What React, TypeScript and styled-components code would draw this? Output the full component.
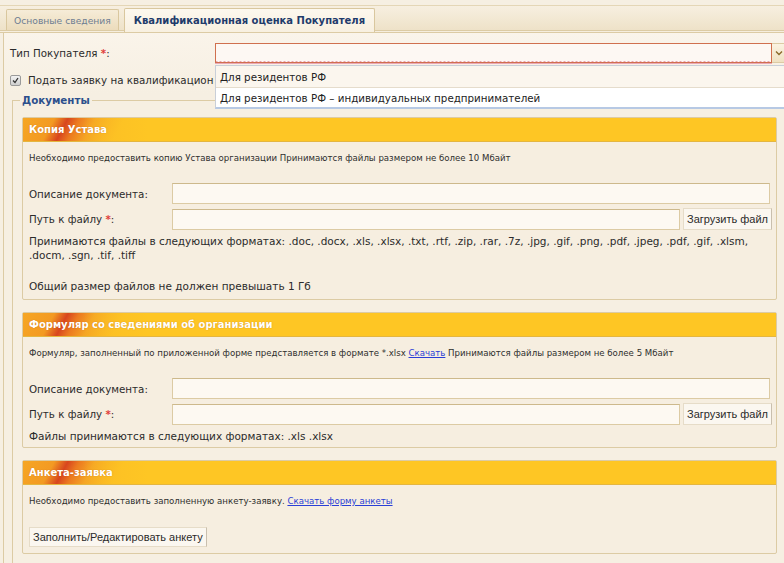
import React from "react";
import styled, { createGlobalStyle } from "styled-components";

const GlobalStyle = createGlobalStyle`
  html, body { margin: 0; padding: 0; }
  body {
    background: #f6efe2;
    font-family: "DejaVu Sans", Verdana, sans-serif;
    color: #2b2b2b;
    overflow: hidden;
  }
`;

const Window = styled.div`
  width: 800px;
  height: 563px;
  overflow: hidden;
  background: #f6efe2;
`;

const TabBar = styled.div`
  height: 24px;
  margin-top: 5px;
  padding-left: 6px;
  display: flex;
  align-items: flex-end;
  gap: 5px;
  background: linear-gradient(#f7efe0, #eee2c8);
  border-top: 1px solid #e4d6b6;
  border-bottom: 3px double #dccba4;
`;

const Tab = styled.div<{ $active?: boolean }>`
  height: ${(p) => (p.$active ? 24 : 21)}px;
  box-sizing: border-box;
  display: flex;
  align-items: center;
  padding: 0 ${(p) => (p.$active ? 9 : 7)}px;
  margin-bottom: ${(p) => (p.$active ? -2 : 0)}px;
  border: 1px solid #d9c79e;
  border-bottom: none;
  border-radius: 2px 2px 0 0;
  background: ${(p) =>
    p.$active ? "linear-gradient(#fdf8ee, #f8f0e0)" : "linear-gradient(#f6ecd8, #ecdcbc)"};
  font-size: ${(p) => (p.$active ? 10 : 9.2)}px;
  font-weight: ${(p) => (p.$active ? 700 : 400)};
  color: ${(p) => (p.$active ? "#1f3b6b" : "#6e7d92")};
  white-space: nowrap;
`;

const Panel = styled.div`
  margin-left: 3px;
  border-left: 1px solid #dccba4;
  background: linear-gradient(#faf4ea, #f6efe2 60px);
  padding: 10px 0 0 6px;
  min-height: 540px;
`;

const FieldRow = styled.div`
  position: relative;
  display: flex;
  align-items: center;
  height: 20px;
`;

const TopLabel = styled.div`
  width: 205px;
  font-size: 10.3px;
  color: #2b2b2b;
`;

const Star = styled.span`
  color: #e0403a;
  font-weight: 700;
`;

const Select = styled.div`
  width: 557px;
  height: 20px;
  box-sizing: border-box;
  border: 1px solid #d0704e;
  box-shadow: 0 1px 0 #e9a8b8;
  background-image: linear-gradient(to right, #e8a2b2 50%, transparent 50%);
  background-size: 4px 1px;
  background-repeat: repeat-x;
  background-position: bottom;
  background-color: #fdf8f3;
`;

const Arrow = styled.div`
  width: 14px;
  height: 20px;
  box-sizing: border-box;
  border: 1px solid #dccba4;
  border-left: none;
  background: linear-gradient(#fbf3e2, #efe1c2);
  display: flex;
  align-items: center;
  justify-content: center;
`;

const DropList = styled.div`
  position: absolute;
  left: 205px;
  top: 22px;
  width: 580px;
  background: #fff;
  border: 1px solid #c9cfd8;
  border-right: none;
  border-bottom: 2px solid #b7c9e4;
  z-index: 5;
`;

const DropItem = styled.div<{ $hover?: boolean }>`
  height: ${(p) => (p.$hover ? 21 : 19)}px;
  display: flex;
  align-items: center;
  padding-left: 4px;
  font-size: 10.3px;
  color: #222;
  background: ${(p) => (p.$hover ? "#fbf6ee" : "#ffffff")};
  border-bottom: ${(p) => (p.$hover ? "1px solid #e5dccc" : "none")};
`;

const CheckRow = styled.label`
  display: flex;
  width: fit-content;
  align-items: center;
  gap: 7px;
  margin-top: 10px;
  height: 14px;
  font-size: 10.3px;
  color: #2b2b2b;
`;

const CheckText = styled.span`
  width: 186px;
  overflow: hidden;
  white-space: nowrap;
`;

const CheckBox = styled.span`
  width: 9px;
  height: 9px;
  border: 1px solid #9a9a9a;
  border-radius: 2px;
  background: linear-gradient(#f2f2f2, #cfcfcf);
  display: flex;
  align-items: center;
  justify-content: center;
`;

const Fieldset = styled.fieldset`
  margin: 7px 0 0 2px;
  padding: 11px 0 0 9px;
  border: 1px solid #dccba4;
  border-right: none;
  border-bottom: none;
  min-width: 0;
  width: 790px;
  box-sizing: border-box;
`;

const Legend = styled.legend`
  padding: 0 2px;
  margin-left: -2px;
  font-size: 10.3px;
  font-weight: 700;
  color: #2c4f8c;
`;

const Section = styled.div`
  width: 755px;
  box-sizing: border-box;
  border: 1px solid #dccba4;
  border-radius: 2px;
  background: #f6eee0;
  margin-bottom: 12px;
`;

const SectionHead = styled.div`
  height: 23px;
  display: flex;
  align-items: center;
  padding-left: 6px;
  font-size: 10px;
  font-weight: 700;
  color: #fff;
  text-shadow: 0 0 1px rgba(160, 60, 0, 0.5);
  border-bottom: 1px solid #e4b640;
  background:
    linear-gradient(to right, rgba(254, 198, 36, 0) 60px, #fec624 125px),
    linear-gradient(118deg, #f6a624 0, #f39a22 28px, #d8461e 40px, #ec7a20 50px, #f5a424 64px, #fbbd24 90px);
`;

const SectionBody = styled.div<{ $pb: number }>`
  padding: 10px 6px ${(p) => p.$pb}px 6px;
`;

const Note = styled.div`
  font-size: 8.6px;
  line-height: 12px;
  color: #2e2e2e;
  margin-bottom: 19px;
`;

const Link = styled.a`
  color: #2a3fd6;
  text-decoration: underline;
`;

const InputRow = styled.div`
  display: flex;
  align-items: center;
  margin-bottom: 4px;
`;

const RowLabel = styled.div`
  width: 143px;
  flex-shrink: 0;
  font-size: 10.3px;
  color: #2b2b2b;
`;

const TextInput = styled.div<{ $w: number }>`
  width: ${(p) => p.$w}px;
  flex-shrink: 0;
  height: 21px;
  box-sizing: border-box;
  border: 1px solid #dccba4;
  border-top-color: #cdb98c;
  background: #fdf9f2;
`;

const Button = styled.div<{ $h?: number }>`
  display: inline-flex;
  flex-shrink: 0;
  height: ${(p) => p.$h ?? 22}px;
  box-sizing: border-box;
  align-items: center;
  padding: 0 3px;
  font-family: "Liberation Sans", Arial, sans-serif;
  font-size: 11px;
  color: #2b2b2b;
  background: #fbf7f0;
  border: 1px solid #e6dcc8;
  border-right-color: #c9bfae;
  white-space: nowrap;
`;

const Info = styled.div<{ $mt?: number }>`
  font-size: 10.5px;
  line-height: 14px;
  color: #2b2b2b;
  margin-top: ${(p) => p.$mt ?? 0}px;
`;

const FileFields: React.FC = () => (
  <>
    <InputRow>
      <RowLabel>Описание документа:</RowLabel>
      <TextInput $w={598} />
    </InputRow>
    <InputRow>
      <RowLabel>
        Путь к файлу <Star>*</Star>:
      </RowLabel>
      <TextInput $w={508} />
      <Button style={{ marginLeft: 3 }}>Загрузить файл</Button>
    </InputRow>
  </>
);

export default function App() {
  return (
    <Window>
      <GlobalStyle />
      <TabBar>
        <Tab>Основные сведения</Tab>
        <Tab $active>Квалификационная оценка Покупателя</Tab>
      </TabBar>
      <Panel>
        <FieldRow>
          <TopLabel>
            Тип Покупателя <Star>*</Star>:
          </TopLabel>
          <Select />
          <Arrow>
            <svg width="8" height="6" viewBox="0 0 8 6">
              <path d="M1 1.5 L4 4.5 L7 1.5" fill="none" stroke="#8a6a2a" strokeWidth="1.4" />
            </svg>
          </Arrow>
          <DropList>
            <DropItem $hover>Для резидентов РФ</DropItem>
            <DropItem>Для резидентов РФ – индивидуальных предпринимателей</DropItem>
          </DropList>
        </FieldRow>
        <CheckRow>
          <CheckBox>
            <svg width="7" height="7" viewBox="0 0 7 7">
              <path d="M1 3.5 L3 5.5 L6 1" fill="none" stroke="#333" strokeWidth="1.3" />
            </svg>
          </CheckBox>
          <CheckText>Подать заявку на квалификационную оценку</CheckText>
        </CheckRow>
        <Fieldset>
          <Legend>Документы</Legend>
          <Section>
            <SectionHead>Копия Устава</SectionHead>
            <SectionBody $pb={6}>
              <Note>
                Необходимо предоставить копию Устава организации Принимаются файлы размером не более 10 Мбайт
              </Note>
              <FileFields />
              <Info $mt={2}>
                Принимаются файлы в следующих форматах: .doc, .docx, .xls, .xlsx, .txt, .rtf, .zip, .rar, .7z,
                .jpg, .gif, .png, .pdf, .jpeg, .pdf, .gif, .xlsm,
                <br />
                .docm, .sgn, .tif, .tiff
              </Info>
              <Info $mt={17}>Общий размер файлов не должен превышать 1 Гб</Info>
            </SectionBody>
          </Section>
          <Section>
            <SectionHead>Формуляр со сведениями об организации</SectionHead>
            <SectionBody $pb={4}>
              <Note>
                Формуляр, заполненный по приложенной форме представляется в формате *.xlsx{" "}
                <Link>Скачать</Link> Принимаются файлы размером не более 5 Мбайт
              </Note>
              <FileFields />
              <Info>Файлы принимаются в следующих форматах: .xls .xlsx</Info>
            </SectionBody>
          </Section>
          <Section>
            <SectionHead>Анкета-заявка</SectionHead>
            <SectionBody $pb={6}>
              <Note>
                Необходимо предоставить заполненную анкету-заявку. <Link>Скачать форму анкеты</Link>
              </Note>
              <Button $h={20}>Заполнить/Редактировать анкету</Button>
            </SectionBody>
          </Section>
        </Fieldset>
      </Panel>
    </Window>
  );
}
